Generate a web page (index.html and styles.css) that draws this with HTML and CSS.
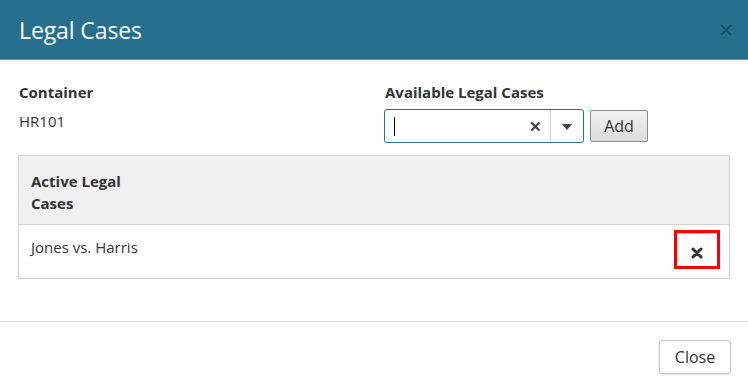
FILE: index.html
```html
<!DOCTYPE html>
<html lang="en">
<head>
    <meta charset="UTF-8">
    <title>Legal Cases</title>
    <link rel="stylesheet" href="styles.css">
</head>
<body>

    <div class="modal">
        <!-- Header -->
        <div class="modal-header">
            <h2 class="modal-title">Legal Cases</h2>
            <button class="header-close" type="button">&times;</button>
        </div>

        <!-- Body -->
        <div class="modal-body">
            <div class="fields">
                <div class="field field-container">
                    <div class="field-label">Container</div>
                    <div class="field-value">HR101</div>
                </div>
                <div class="field">
                    <div class="field-label">Available Legal Cases</div>
                    <div class="picker">
                        <div class="combo">
                            <div class="combo-input"><span class="caret"></span></div>
                            <span class="combo-clear">&#x2715;</span>
                            <span class="combo-toggle"><span class="arrow"></span></span>
                        </div>
                        <button class="btn-add" type="button">Add</button>
                    </div>
                </div>
            </div>

            <table class="cases">
                <thead>
                    <tr>
                        <th class="col-name">Active Legal Cases</th>
                        <th></th>
                    </tr>
                </thead>
                <tbody>
                    <tr>
                        <td>Jones vs. Harris</td>
                        <td class="col-action">
                            <button class="btn-remove" type="button">
                                <svg width="12" height="12" viewBox="0 0 12 12">
                                    <path d="M2 2 L10 10 M10 2 L2 10" stroke="#333" stroke-width="3" stroke-linecap="round"/>
                                </svg>
                            </button>
                        </td>
                    </tr>
                </tbody>
            </table>
        </div>

        <!-- Footer -->
        <div class="modal-footer">
            <button class="btn-close" type="button">Close</button>
        </div>
    </div>

</body>
</html>
```

FILE: styles.css
```css
/* General layout */
body {
    margin: 0;
    font-family: 'Open Sans', 'Noto Sans', sans-serif;
    font-size: 15px;
    color: #333;
    background: #fff;
}

.modal {
    width: 748px;
}

/* Header */
.modal-header {
    height: 59px;
    background-color: #266f8e;
    border-bottom: 1px solid #5f9bb4;
    display: flex;
    align-items: center;
    justify-content: space-between;
    padding: 0 19px;
}

.modal-title {
    margin: 0;
    color: #fff;
    font-size: 23px;
    font-weight: 400;
    letter-spacing: -0.1px;
}

.header-close {
    background: none;
    border: none;
    padding: 0;
    color: #19506a;
    font-size: 24px;
    font-weight: 400;
    line-height: 1;
    margin-right: -4px;
    cursor: pointer;
}

/* Body */
.modal-body {
    padding: 22px 18px 42px 18px;
}

.fields {
    display: flex;
}

.field-container {
    width: 366px;
}

.field-label {
    font-weight: 700;
    line-height: 20px;
    padding-left: 1px;
}

.field-value {
    margin-top: 9px;
    line-height: 20px;
    padding-left: 1px;
}

.picker {
    display: flex;
    align-items: center;
    gap: 6px;
    margin-top: 7px;
}

.combo {
    display: flex;
    align-items: center;
    width: 198px;
    height: 32px;
    border: 1px solid #2a6f94;
    border-radius: 3px;
}

.combo-input {
    flex: 1;
    padding-left: 9px;
    display: flex;
    align-items: center;
}

.caret {
    display: block;
    width: 1px;
    height: 19px;
    background: #000;
}

.combo-clear {
    font-size: 15px;
    font-weight: 700;
    color: #444;
    margin-right: 8px;
}

.combo-toggle {
    width: 32px;
    height: 32px;
    border-left: 1px solid #d0d0d0;
    display: flex;
    align-items: center;
    justify-content: center;
}

.arrow {
    width: 0;
    height: 0;
    border-left: 5px solid transparent;
    border-right: 5px solid transparent;
    border-top: 6px solid #444;
    margin-top: 2px;
}

.btn-add {
    width: 58px;
    height: 32px;
    font-family: inherit;
    font-size: 16px;
    color: #333;
    background: linear-gradient(#f2f2f2, #dcdcdc);
    border: 1px solid #8a8a8a;
    border-radius: 2px;
    padding: 0;
}

/* Cases table */
.cases {
    width: 100%;
    margin-top: 12px;
    border-collapse: collapse;
    border: 1px solid #d3d3d3;
}

.cases th {
    background-color: #f0f0f0;
    text-align: left;
    font-weight: 700;
    line-height: 22px;
    padding: 14px 12px 10px 12px;
    border-bottom: 1px solid #d3d3d3;
    vertical-align: top;
}

.cases th.col-name {
    width: 112px;
}

.cases td {
    padding: 12px 12px 7px 12px;
    line-height: 20px;
    vertical-align: top;
}

.cases td.col-action {
    text-align: right;
    padding: 5px 9px 9px 12px;
}

.btn-remove {
    width: 46px;
    height: 39px;
    background: #fff;
    border: 3px solid #f00;
    box-shadow: inset 0 1px 0 #ccc;
    padding: 0;
    display: inline-flex;
    align-items: center;
    justify-content: center;
    cursor: pointer;
}

.btn-remove svg {
    margin-top: 6px;
}

/* Footer */
.modal-footer {
    border-top: 1px solid #dcdcdc;
    padding: 18px 17px;
    display: flex;
    justify-content: flex-end;
}

.btn-close {
    width: 72px;
    height: 34px;
    font-family: inherit;
    font-size: 16px;
    color: #333;
    background: #fff;
    border: 1px solid #c8c8c8;
    border-radius: 3px;
    box-shadow: 0 1px 2px rgba(0, 0, 0, 0.12);
}
```
